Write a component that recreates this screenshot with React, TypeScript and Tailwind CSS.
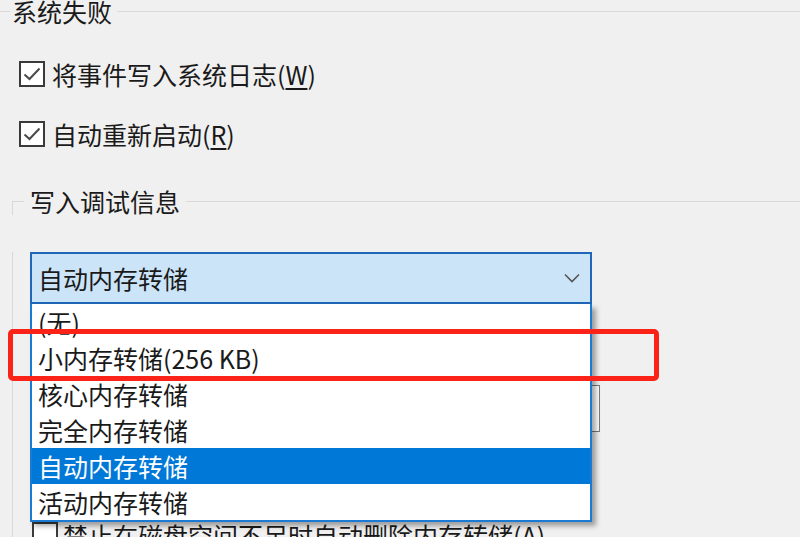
import React from 'react';

// Casilla de verificación marcada al estilo Windows 10
const CheckBox: React.FC = () => (
  <span className="flex h-[26px] w-[26px] shrink-0 items-center justify-center border-2 border-[#3a3a3a] bg-white">
    <svg width="18" height="14" viewBox="0 0 18 14" fill="none">
      <path d="M1.5 7.5 L6.5 12 L16.5 1.5" stroke="#4a4a4a" strokeWidth="2" />
    </svg>
  </span>
);

interface CheckRowProps {
  label: string;
  hotkey: string;
  className?: string;
}

const CheckRow: React.FC<CheckRowProps> = ({ label, hotkey, className = '' }) => (
  <div className={`flex h-[28px] items-center gap-[7px] ${className}`}>
    <CheckBox />
    <span className="whitespace-nowrap leading-[28px]">
      {label}(<u className="underline-offset-[3px]">{hotkey}</u>)
    </span>
  </div>
);

const options = ['(无)', '小内存转储(256 KB)', '核心内存转储', '完全内存转储', '自动内存转储', '活动内存转储'];
const selected = 4;

export default function App() {
  return (
    <div
      className="relative h-[537px] w-[800px] overflow-hidden bg-[#f0f0f0] text-[25px] text-[#1a1a1a]"
      style={{ fontFamily: '"Noto Sans CJK SC", "Noto Sans", sans-serif' }}
    >
      {/* Grupo: 系统失败 */}
      <div className="-mt-[3px] flex h-[28px] items-center">
        <div className="w-[10px] border-t border-[#d9d9d9]" />
        <span className="px-[2px] leading-[28px]">系统失败</span>
        <div className="ml-[3px] flex-1 border-t border-[#d9d9d9]" />
      </div>

      <CheckRow label="将事件写入系统日志" hotkey="W" className="ml-[19px] mt-[35px]" />
      <CheckRow label="自动重新启动" hotkey="R" className="ml-[19px] mt-[32px]" />

      {/* Grupo: 写入调试信息 */}
      <div className="ml-[12px] mt-[39px]">
        <div className="flex h-[28px] items-center">
          <div className="h-[14px] w-[12px] self-end border-l border-t border-[#d9d9d9]" />
          <span className="px-[6px] leading-[28px]">写入调试信息</span>
          <div className="flex-1 border-t border-[#d9d9d9]" />
        </div>

        <div className="border-l border-[#d9d9d9] pb-[40px]">
          <div className="ml-[17px] mt-[37px] w-[562px]">
            {/* Combo desplegado */}
            <div className="relative z-10">
              <div className="flex h-[52px] items-center justify-between border-2 border-[#2067b8] bg-[#cce4f7] pl-[6px] pr-[10px]">
                <span className="leading-[28px]">自动内存转储</span>
                <svg width="16" height="10" viewBox="0 0 16 10" fill="none">
                  <path d="M1 1.5 L8 8.5 L15 1.5" stroke="#555" strokeWidth="1.6" />
                </svg>
              </div>

              <ul className="absolute left-0 top-full w-full border-2 border-t-0 border-[#1a7ad4] bg-white shadow-[4px_4px_5px_rgba(0,0,0,0.35)]">
                {options.map((opt, i) => (
                  <li
                    key={opt}
                    className={`flex h-[36px] items-center whitespace-nowrap pl-[6px] leading-[28px] ${
                      i === selected ? 'bg-[#0078d7] text-white' : ''
                    }`}
                  >
                    {opt}
                  </li>
                ))}
              </ul>
            </div>

            {/* Campo de archivo de volcado (oculto bajo la lista) */}
            <div className="mt-[81px] h-[47px] w-[570px] border border-[#7a7a7a] bg-white" />

            <div className="mt-[89px] flex h-[28px] items-center gap-[5px] pl-[2px]">
              <span className="h-[26px] w-[26px] shrink-0 border-2 border-[#3a3a3a] bg-white" />
              <span className="whitespace-nowrap leading-[28px]">
                禁止在磁盘空间不足时自动删除内存转储(<u>A</u>)
              </span>
            </div>
          </div>
        </div>
      </div>

      {/* Marco rojo de resaltado */}
      <div className="pointer-events-none absolute left-[8px] top-[329px] z-20 h-[52px] w-[651px] rounded-[5px] border-[5px] border-[#fb2318]" />
    </div>
  );
}
